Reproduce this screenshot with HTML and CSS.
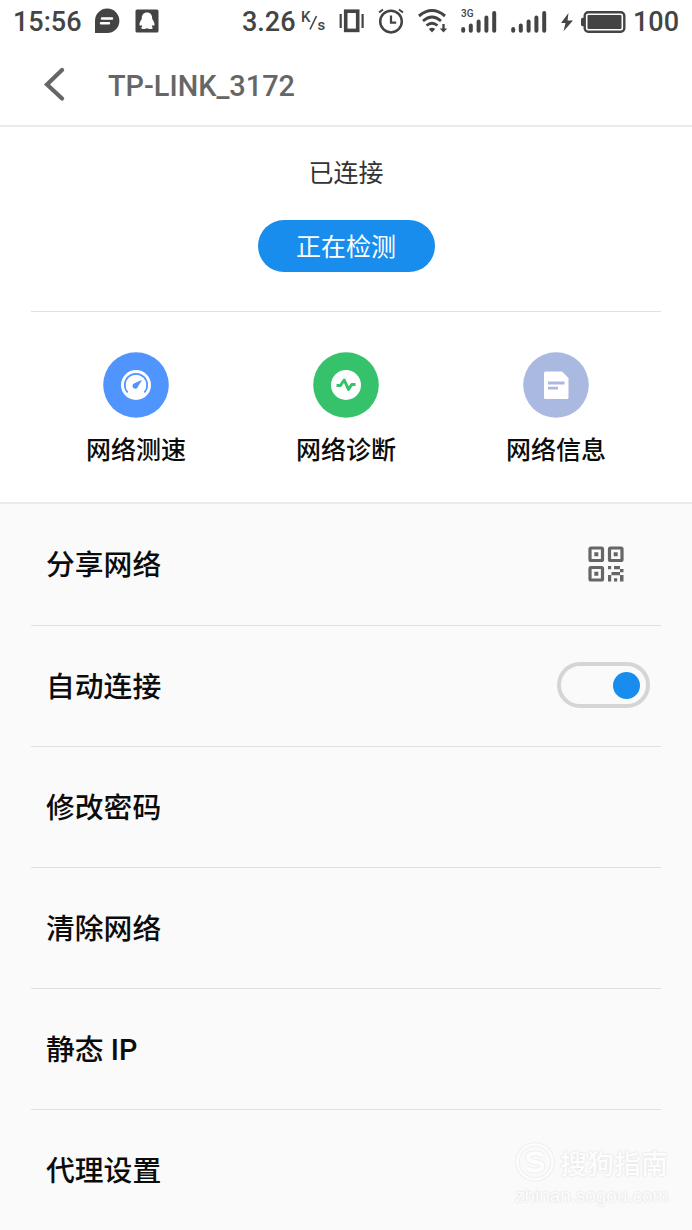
FILE: index.html
```html
<!DOCTYPE html>
<html lang="zh-CN">
<head>
    <meta charset="UTF-8">
    <meta name="viewport" content="width=device-width, initial-scale=1.0">
    <title>TP-LINK_3172</title>
    <link rel="stylesheet" href="styles.css">
</head>
<body>
    <div class="status-bar">
        <span class="time">15:56</span>
        <svg class="icon-chat" width="26" height="26" viewBox="0 0 26 26">
            <path d="M1 25V12.500A12.200 12.200 0 1 1 13.200 25z" fill="#444"/>
            <path d="M8 10.500h10M7 15.200h8" stroke="#fff" stroke-width="2.400" stroke-linecap="round"/>
        </svg>
        <svg class="icon-qq" width="24" height="24" viewBox="0 0 24 24">
            <rect x="0.500" y="0.500" width="23" height="23" rx="1.500" fill="#444"/>
            <path d="M12 3.500c-3.600 0-5.400 2.600-5.200 6.500-1.500 2-2.500 4.200-2.300 6 .2.900 1.200.8 1.900 0l.8 1.500c-1.700 1.300-.9 2.600 1.100 2.600 1.500 0 2.700-.5 3.700-.9 1 .4 2.200.9 3.700.9 2 0 2.800-1.300 1.100-2.600l.8-1.500c.7.800 1.700.9 1.900 0 .2-1.800-.8-4-2.300-6 .2-3.900-1.600-6.500-5.200-6.500z" fill="#fff"/>
        </svg>
        <span class="speed">3.26</span>
        <span class="unit"><span class="unit-top">K</span><svg width="9" height="17" viewBox="0 0 9 17"><path d="M1 15.500L7.500 2" stroke="#444" stroke-width="1.600"/></svg><span class="unit-bottom">s</span></span>
        <svg class="icon-vibrate" width="26" height="26" viewBox="0 0 26 26" fill="none" stroke="#444">
            <rect x="6.700" y="3.200" width="12" height="19.200" stroke-width="3.600"/>
            <path d="M1.700 6v14M23.600 6v14" stroke-width="2.200"/>
        </svg>
        <svg class="icon-alarm" width="26" height="26" viewBox="0 0 26 26" fill="none" stroke="#444">
            <circle cx="13" cy="13.600" r="10.800" stroke-width="2.500"/>
            <path d="M13 7.500v7.200h5.200" stroke-width="2.200"/>
            <path d="M1 4.500L5 1.500M21 1.500L25 4.500" stroke-width="2"/>
        </svg>
        <svg class="icon-wifi" width="32" height="26" viewBox="0 0 32 26" fill="none" stroke="#444">
            <path d="M2 8Q15 -3 28 8" stroke-width="3"/>
            <path d="M6 13Q15 5 24 13M9.500 17.500Q15 13 20.500 17.500" stroke-width="2.700"/>
            <path d="M11.800 21Q15 18.500 18.200 21L15 24.500z" fill="#444" stroke="none"/>
            <path d="M26.500 16v6" stroke-width="2.400"/>
            <path d="M22.800 20.500h7.400l-3.700 4z" fill="#444" stroke="none"/>
        </svg>
        <span class="signal">
            <span class="network">3G</span>
            <svg width="36" height="24" viewBox="0 0 36 24" stroke="#444" stroke-width="4" stroke-linecap="round">
                <path d="M2.200 19v1.800M9.800 15.500v5.300M17.600 11.500v9.300M25.400 7.500v13.300M33.200 3v17.800"/>
            </svg>
        </span>
        <svg class="icon-signal" width="36" height="24" viewBox="0 0 36 24" stroke="#444" stroke-width="4" stroke-linecap="round">
            <path d="M2.200 19v1.800M9.800 15.500v5.300M17.600 11.500v9.300M25.400 7.500v13.300M33.200 3v17.800"/>
        </svg>
        <svg class="icon-bolt" width="14" height="20" viewBox="0 0 14 20">
            <path d="M8.500 1L1 11h4.500L3.500 19.200 13 8.500H7.500z" fill="#444"/>
        </svg>
        <svg class="icon-battery" width="46" height="24" viewBox="0 0 46 24">
            <rect x="4.700" y="2.200" width="39.600" height="19.600" rx="3.500" fill="none" stroke="#444" stroke-width="2.400"/>
            <rect x="7.500" y="5" width="34" height="14" rx="1" fill="#444"/>
            <path d="M4 7.800H2.500Q1 7.800 1 9.500v5Q1 16.200 2.500 16.200H4z" fill="#444"/>
        </svg>
        <span class="percent">100</span>
    </div>

    <div class="header">
        <svg width="24" height="34" viewBox="0 0 24 34">
            <path d="M19 3L4 17.500 19 31.500" fill="none" stroke="#666" stroke-width="4.200" stroke-linecap="round" stroke-linejoin="miter"/>
        </svg>
        <h1>TP-LINK_3172</h1>
    </div>

    <div class="connection">
        <div class="status">
            <p>已连接</p>
            <button type="button">正在检测</button>
        </div>
        <div class="tools">
            <div class="tool">
                <svg width="66" height="66" viewBox="0 0 66 66">
                    <circle cx="33" cy="33" r="32.800" fill="#5094fd"/>
                    <circle cx="33" cy="33" r="15" fill="#fff"/>
                    <path d="M24.700 40.500A11.200 11.200 0 1 1 41.300 40.500" fill="none" stroke="#5094fd" stroke-width="1.700"/>
                    <path d="M39.200 27.800L35 34.600A2.800 2.800 0 1 1 31.500 31.300z" fill="#5094fd"/>
                </svg>
                <span>网络测速</span>
            </div>
            <div class="tool">
                <svg width="66" height="66" viewBox="0 0 66 66">
                    <circle cx="33" cy="33" r="32.800" fill="#35c26a"/>
                    <circle cx="33" cy="33" r="15" fill="#fff"/>
                    <path d="M23.500 33.500h4L31.200 28l4.300 9.500 3.200-5h3.800" fill="none" stroke="#35c26a" stroke-width="3" stroke-linejoin="round"/>
                </svg>
                <span>网络诊断</span>
            </div>
            <div class="tool">
                <svg width="66" height="66" viewBox="0 0 66 66">
                    <circle cx="33" cy="33" r="32.800" fill="#aab9df"/>
                    <path d="M22.500 19.500H39L45.500 26v19.500q0 1.500-1.500 1.500H22.500q-1.500 0-1.500-1.500V21q0-1.500 1.500-1.500z" fill="#fff"/>
                    <path d="M25 31h16.500M25 36.200h10" stroke="#aab9df" stroke-width="2.800"/>
                </svg>
                <span>网络信息</span>
            </div>
        </div>
    </div>

    <ul class="settings">
        <li>
            <span class="label">分享网络</span>
            <svg class="icon-qr" width="36" height="36" viewBox="0 0 36 36">
                <g fill="none" stroke="#666" stroke-width="3.200">
                    <rect x="2" y="2" width="12.500" height="12.500" rx="1"/>
                    <rect x="21.500" y="2" width="12.500" height="12.500" rx="1"/>
                    <rect x="2" y="21.500" width="12.500" height="12.500" rx="1"/>
                </g>
                <path d="M6.300 6.300h4v4h-4zM25.700 6.300h4v4h-4zM6.300 25.800h4v4h-4zM20 20h3.200v3.200h-3.200zM26 20h6v3.200h-6zM32 23h3.500v3.200h-3.500zM23.500 26h8.500v3.200h-8.500zM20 29h3.200v6.500h-3.200zM26 32.200h3.200v3.300h-3.200zM32 29h3.500v6.500h-3.500z" fill="#666"/>
            </svg>
        </li>
        <li>
            <span class="label">自动连接</span>
            <span class="switch"></span>
        </li>
        <li><span class="label">修改密码</span></li>
        <li><span class="label">清除网络</span></li>
        <li><span class="label">静态 IP</span></li>
        <li><span class="label">代理设置</span></li>
    </ul>

    <div class="watermark">
        <div class="brand">
            <svg width="40" height="40" viewBox="0 0 40 40" fill="none">
                <circle cx="20" cy="20" r="17.500" stroke="#efefef" stroke-width="4.500"/>
                <circle cx="20" cy="20" r="17.500" stroke="#fdfdfd" stroke-width="2.500"/>
                <path d="M28 13.500C23 10 12.500 11 13 16s14.500 3 14.500 8-10 6-16 2.500" stroke="#efefef" stroke-width="6"/>
                <path d="M28 13.500C23 10 12.500 11 13 16s14.500 3 14.500 8-10 6-16 2.500" stroke="#fdfdfd" stroke-width="4"/>
            </svg>
            <span>搜狗指南</span>
        </div>
        <div class="site">zhinan.sogou.com</div>
    </div>
</body>
</html>
```
FILE: styles.css
```css
* {
    box-sizing: border-box;
}
body {
    margin: 0;
    height: 1230px;
    overflow: hidden;
    background: #fafafa;
    color: #0c0c0c;
    font-family: Roboto, "Noto Sans CJK SC", sans-serif;
    font-weight: 500;
}
svg {
    display: block;
    flex-shrink: 0;
}
/* Barra de estado */
.status-bar {
    display: flex;
    align-items: center;
    height: 43px;
    padding-left: 13px;
    background: #fff;
    color: #444;
    font-size: 27px;
    line-height: 43px;
    white-space: nowrap;
}
.time, .speed, .percent {
    padding-top: 1px;
}
.time {
    width: 81px;
}
.icon-chat, .icon-qq {
    margin-bottom: 1px;
}
.icon-qq {
    margin-left: 15px;
}
.speed {
    width: 58px;
    margin-left: 83px;
}
.unit {
    display: flex;
    width: 38px;
    height: 26px;
    padding-top: 5px;
    padding-left: 1px;
    font-size: 15px;
    line-height: 15px;
}
.unit-top {
    margin-top: -4px;
}
.unit-bottom {
    margin-top: 4px;
}
.unit svg {
    margin: 0 -1px;
}
.icon-vibrate {
    margin: 0 0 1px 1px;
}
.icon-alarm {
    margin: 0 0 1px 13px;
}
.icon-wifi {
    margin: 0 0 1px 13px;
}
.signal {
    position: relative;
    margin-left: 12px;
}
.network {
    position: absolute;
    top: -1px;
    left: 0;
    font-size: 10px;
    line-height: 10px;
}
.icon-signal {
    margin-left: 14px;
}
.icon-bolt {
    margin-left: 13px;
}
.icon-battery {
    margin-left: 6px;
}
.percent {
    margin-left: 7px;
}
/* Cabecera */
.header {
    display: flex;
    align-items: center;
    height: 84px;
    padding-left: 43px;
    border-bottom: 2px solid #ebebeb;
    background: #fff;
    color: #666;
}
.header h1 {
    margin: 3px 0 0 41px;
    font-size: 28.900px;
    font-weight: 500;
}
/* Estado de la conexion */
.connection {
    height: 377px;
    padding: 0 31px;
    border-bottom: 2px solid #ebebeb;
    background: #fff;
}
.status {
    display: flex;
    flex-direction: column;
    align-items: center;
    height: 185px;
    padding-top: 29px;
    border-bottom: 1px solid #e0e0e0;
}
.status p {
    margin: 0;
    color: #333;
    font-size: 25px;
    font-weight: 400;
    line-height: 36px;
}
.status button {
    width: 177px;
    height: 52px;
    margin-top: 28px;
    padding: 4px 0 0;
    border: none;
    border-radius: 26px;
    background: #198ded;
    color: #fff;
    font-family: inherit;
    font-size: 25px;
    line-height: 48px;
}
.tools {
    display: grid;
    grid-template-columns: repeat(3, 1fr);
    padding-top: 40px;
}
.tool {
    display: flex;
    flex-direction: column;
    align-items: center;
    font-size: 25px;
    line-height: 36px;
}
.tool span {
    margin-top: 15px;
}
/* Lista de opciones */
.settings {
    margin: 0;
    padding: 0 31px;
    list-style: none;
}
.settings li {
    display: flex;
    align-items: center;
    justify-content: space-between;
    height: 121px;
    padding: 0 11px 2px 15px;
    border-bottom: 1px solid #e0e0e0;
    font-size: 28.800px;
}
.settings li:first-child {
    height: 122px;
}
.settings li:last-child {
    border-bottom: none;
}
.label {
    padding-bottom: 2px;
}
.icon-qr {
    margin-right: 26px;
}
.switch {
    display: flex;
    align-items: center;
    justify-content: flex-end;
    width: 93px;
    height: 46px;
    padding-right: 6px;
    border: 4px solid #d5d5d5;
    border-radius: 23px;
}
.switch::after {
    content: "";
    width: 27px;
    height: 27px;
    border-radius: 50%;
    background: #198ded;
}
/* Marca de agua */
.watermark {
    position: absolute;
    top: 1142px;
    left: 515px;
    color: #fdfdfd;
    text-shadow: 0 0 2px #e2e2e2, 0 0 2px #e2e2e2;
}
.brand {
    display: flex;
    align-items: center;
    gap: 5px;
    height: 40px;
    font-size: 27px;
}
.site {
    margin-top: 4px;
    font-family: "Liberation Sans", Arial, sans-serif;
    font-size: 18.900px;
    line-height: 20px;
}
```
